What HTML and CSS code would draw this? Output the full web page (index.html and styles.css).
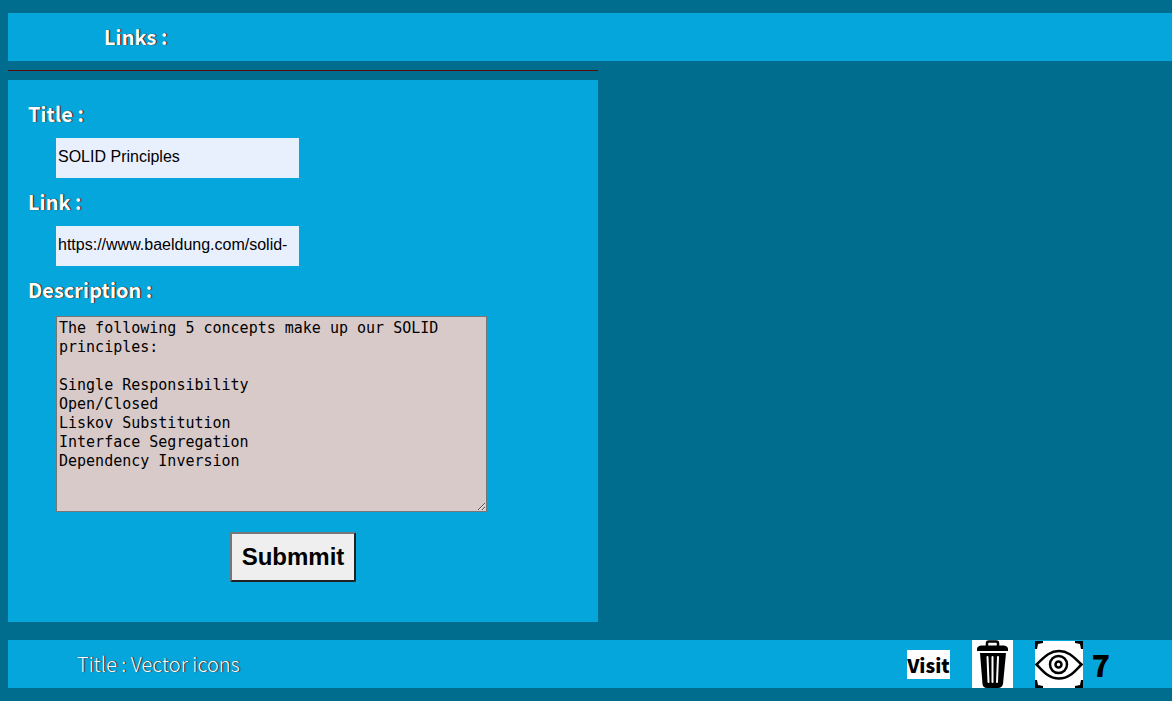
FILE: index.html
```html
<!DOCTYPE html>
<html lang="en">
<head>
<meta charset="utf-8">
<meta name="viewport" content="width=device-width, initial-scale=1">
<title>Links</title>
<link rel="stylesheet" href="styles.css">
</head>
<body>
<header class="bar header-bar"><h1 class="heading">Links :</h1></header>
<main>
  <form class="link-form">
    <label class="label" for="title">Title :</label>
    <input class="field" id="title" type="text" value="SOLID Principles">
    <label class="label" for="link">Link :</label>
    <input class="field" id="link" type="text" value="https://www.baeldung.com/solid-">
    <label class="label" for="description">Description :</label>
    <textarea class="description" id="description">The following 5 concepts make up our SOLID principles:

Single Responsibility
Open/Closed
Liskov Substitution
Interface Segregation
Dependency Inversion
</textarea>
    <button class="submit" type="button">Submmit</button>
  </form>
  <section class="bar link-row">
    <span class="link-title">Title : Vector icons</span>
    <div class="actions">
      <a class="visit" href="#visit">Visit</a>
      <button class="icon-button trash" type="button" aria-label="Delete">
        <svg width="41" height="48" viewBox="0 0 41 48">
          <path d="M15 6V3Q15 1.500 17 1.500H24Q26 1.500 26 3V6" fill="none" stroke="#000" stroke-width="2.500"/>
          <path d="M5 11V9Q5 6 9 5.500H32Q36 6 36 9V11Z"/>
          <path d="M8 13H34L31 44Q30 48 26 48H15Q11 48 10.500 44Z"/>
          <path d="M15.500 17L16.500 42M20.500 17V42M26 17L25 42" fill="none" stroke="#fff" stroke-width="2" stroke-linecap="round"/>
        </svg>
      </button>
      <span class="views">
        <svg class="eye" width="48" height="47" viewBox="0 0 48 47" role="img" aria-label="Views">
          <g fill="none" stroke="#000" stroke-width="2.500">
            <path d="M1.500 23.500C7 19 13 10 24 10S41 19 46.500 23.500C41 29 35 37.500 24 37.500S7 29 1.500 23.500Z"/>
            <circle cx="23.500" cy="23.500" r="8.500"/>
            <circle cx="23.500" cy="23.500" r="3"/>
          </g>
          <path d="M0 0H8V2L3 3L2 8H0ZM40 0H48V8H46L45 3L40 2ZM0 39H2L3 44L8 45V47H0ZM46 39H48V47H40V45L45 44Z"/>
        </svg>
        <span class="count">7</span>
      </span>
    </div>
  </section>
</main>
</body>
</html>
```
FILE: styles.css
```css
* { box-sizing: border-box; }
body {
  margin: 13px 0 0 8px;
  background: #006d8f;
  color: #fff;
  font-family: "Noto Sans CJK SC", "Noto Sans", sans-serif;
}
.bar {
  display: flex;
  align-items: center;
  height: 48px;
  background: #05a6db;
}
.header-bar { padding-left: 96px; }
.heading, .label {
  margin: 0;
  font-size: 20px;
  line-height: 32px;
  font-weight: 700;
  text-shadow: 1px 0 1px #600000;
}
main::before {
  content: "";
  display: block;
  width: calc(50% + 8px);
  height: 1px;
  margin: 9px 0;
  background: #5c0909;
}
.link-form {
  display: flex;
  flex-direction: column;
  align-items: flex-start;
  width: calc(50% + 8px);
  padding: 18px 20px 40px;
  background: #05a6db;
}
.field {
  width: 243px;
  height: 40px;
  margin: 8px 0 8px 28px;
  padding: 0 2px 2px;
  border: 0;
  background: #e8f0fe;
  color: #000;
  font: 16px "Liberation Sans", Arial, sans-serif;
}
.description {
  width: 431px;
  height: 196px;
  max-width: calc(100% - 28px);
  margin: 10px 0 20px 28px;
  padding: 2px;
  border: 1px solid #767676;
  border-radius: 0;
  background: #d8cac9;
  color: #000;
  font: 15px/19px "DejaVu Sans Mono", monospace;
}
.submit {
  align-self: center;
  margin-right: 20px;
  padding: 10px;
  border: 2px solid;
  border-color: #767676 #222 #222 #767676;
  border-radius: 2px;
  background: #efefef;
  color: #000;
  font: bold 24px/26px "Liberation Sans", Arial, sans-serif;
}
.link-row {
  justify-content: space-between;
  margin-top: 18px;
  padding: 0 62px 0 69px;
}
.link-title {
  font-size: 20px;
  line-height: 32px;
  font-weight: 300;
  text-shadow: 1px 0 1px #600000;
}
.actions { display: flex; align-items: center; gap: 22px; }
.visit {
  background: #fff;
  color: #000;
  font-size: 19px;
  line-height: 29px;
  font-weight: 900;
  text-decoration: none;
}
.icon-button { display: block; padding: 0; border: 0; background: #fff; }
.icon-button svg, .eye { display: block; }
.eye { background: #fff; }
.views { display: flex; align-items: center; gap: 9px; }
.count { color: #000; font-size: 30px; line-height: 40px; font-weight: 900; }
```
